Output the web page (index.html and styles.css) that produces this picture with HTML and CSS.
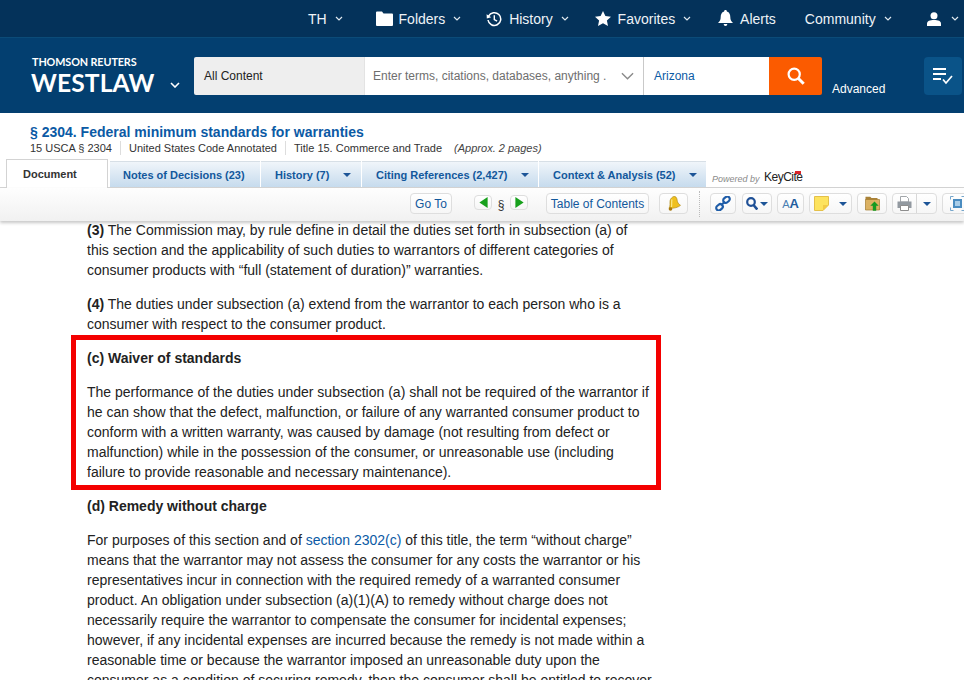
FILE: index.html
```html
<!DOCTYPE html>
<html lang="en">
<head>
<meta charset="utf-8">
<title>Westlaw</title>
<link rel="stylesheet" href="styles.css">
</head>
<body>
<nav class="topbar">
  <span class="nav-item nav-th">TH <svg class="chev" viewBox="0 0 8 5"><path d="M1 1l3 3 3-3"/></svg></span>
  <span class="nav-item nav-folders"><svg class="ico ico-folder" viewBox="0 0 17 15"><path d="M0 1.500Q0 .5 1 .5h5l1.500 2H16q1 0 1 1V14q0 1-1 1H1q-1 0-1-1z"/></svg>Folders <svg class="chev" viewBox="0 0 8 5"><path d="M1 1l3 3 3-3"/></svg></span>
  <span class="nav-item nav-history"><svg class="ico ico-history" viewBox="0 0 16 16"><path d="M2.600 5.200A6.400 6.400 0 1 1 2 9" fill="none" stroke="#fff" stroke-width="1.500"/><path d="M0.600 3.200l4.600 3-4.400 1.200z" fill="#fff"/><path d="M8.300 4.200v4.300l2.800 1.700" fill="none" stroke="#fff" stroke-width="1.400"/></svg>History <svg class="chev" viewBox="0 0 8 5"><path d="M1 1l3 3 3-3"/></svg></span>
  <span class="nav-item nav-fav"><svg class="ico ico-star" viewBox="0 0 16 15"><path d="M8 0l2.400 5 5.600.7-4.100 3.800 1.100 5.500L8 12.300 3 15l1.100-5.500L0 5.700 5.600 5z"/></svg>Favorites <svg class="chev" viewBox="0 0 8 5"><path d="M1 1l3 3 3-3"/></svg></span>
  <span class="nav-item nav-alerts"><svg class="ico ico-bell" viewBox="0 0 15 17"><path d="M7.500 0c1 0 1.400.7 1.400 1.400C11.500 2.200 12.300 4.500 12.300 7c0 3 1 4.500 2.700 6H0c1.700-1.500 2.700-3 2.700-6 0-2.500.8-4.800 3.400-5.600C6.100.7 6.500 0 7.500 0zM5.700 14h3.600c0 1.200-.8 2-1.800 2s-1.800-.8-1.800-2z"/></svg>Alerts</span>
  <span class="nav-item nav-comm">Community <svg class="chev" viewBox="0 0 8 5"><path d="M1 1l3 3 3-3"/></svg></span>
  <span class="nav-item nav-user"><svg class="ico ico-user" viewBox="0 0 14 14"><circle cx="7" cy="3.700" r="3.500"/><path d="M0 14v-2.500C0 9 3 8 7 8s7 1 7 3.500V14z"/></svg><svg class="chev" viewBox="0 0 8 5"><path d="M1 1l3 3 3-3"/></svg></span>
</nav>

<header class="brandbar">
  <div class="logo">
    <div class="logo-tr">THOMSON REUTERS</div>
    <div class="logo-wl">WESTLAW</div>
  </div>
  <svg class="logo-chev" viewBox="0 0 10 6"><path d="M1 1l4 4 4-4"/></svg>
  <div class="search">
    <div class="s-scope">All Content</div>
    <div class="s-input"><span>Enter terms, citations, databases, anything .</span><svg class="s-chev" viewBox="0 0 14 8"><path d="M1 1l6 6 6-6"/></svg></div>
    <div class="s-jur">Arizona</div>
    <div class="s-btn"><svg viewBox="0 0 18 18"><circle cx="7.200" cy="7.200" r="5.600" fill="none" stroke="#fff" stroke-width="2.200"/><path d="M11.200 11.200l5.500 5.500" stroke="#fff" stroke-width="3" fill="none"/></svg></div>
  </div>
  <div class="advanced">Advanced</div>
  <div class="listbtn"><svg viewBox="0 0 22 18"><path d="M1 2h13M1 7h13M1 12h8" stroke="#fff" stroke-width="2.200" fill="none"/><path d="M11 12.500l3 3.500 6-7" stroke="#fff" stroke-width="1.700" fill="none"/></svg></div>
</header>

<section class="dochead">
  <h1 class="doctitle">§ 2304. Federal minimum standards for warranties</h1>
  <div class="cite">
    <span class="cite-a">15 USCA § 2304</span>
    <span class="cite-b">United States Code Annotated</span>
    <span class="cite-c">Title 15. Commerce and Trade</span>
    <em class="cite-d">(Approx. 2 pages)</em>
  </div>
</section>

<div class="tabs">
  <div class="tab tab-doc">Document</div>
  <div class="tab tab-notes">Notes of Decisions (23)</div>
  <div class="tab tab-hist">History (7)<i class="caret"></i></div>
  <div class="tab tab-cite">Citing References (2,427)<i class="caret"></i></div>
  <div class="tab tab-ctx">Context &amp; Analysis (52)<i class="caret"></i></div>
  <div class="keycite"><span class="pw">Powered by</span><span class="kc">KeyCite</span></div>
</div>

<div class="toolbar">
  <button class="tb tb-goto">Go To</button>
  <button class="tb tb-arrow tb-prev"><svg viewBox="0 0 9 12"><path d="M9 0v12L0 6z" fill="#17a01c"/></svg></button>
  <span class="sect">§</span>
  <button class="tb tb-arrow tb-next"><svg viewBox="0 0 9 12"><path d="M0 0v12l9-6z" fill="#17a01c"/></svg></button>
  <button class="tb tb-toc">Table of Contents</button>
  <button class="tb tb-bell"><svg viewBox="0 0 14 15"><path d="M8 .5c1.500.6 2 2 2.200 3.800.2 1.900 1.200 3.800 3.300 5-2 2-6.500 3.400-11.500 3 1.600-2.600.7-4.700 1-7.200C3.200 3 5.500 0 8 .5z" fill="#efc01f" stroke="#a8820f" stroke-width=".6"/><path d="M5 3.500C4.300 5.500 5 8 4.500 11" stroke="#fbe98a" stroke-width="1.200" fill="none"/><circle cx="3.500" cy="13" r="1.800" fill="#a8780f"/></svg></button>
  <span class="dots"></span>
  <button class="tb tb-link"><svg viewBox="0 0 16 15"><g fill="none" stroke="#1f5da8" stroke-width="2.200"><rect x="8" y="1.200" width="7" height="5" rx="2.500" transform="rotate(-40 11.500 3.700)"/><rect x="1" y="8.800" width="7" height="5" rx="2.500" transform="rotate(-40 4.500 11.300)"/><path d="M6 9l4-3.200"/></g></svg></button>
  <button class="tb tb-find"><svg class="i-find" viewBox="0 0 12 13"><circle cx="5" cy="5" r="3.800" fill="none" stroke="#1f5096" stroke-width="2.200"/><path d="M7.500 8l3.800 4.500" stroke="#1f5096" stroke-width="2.600"/></svg><i class="caret caret-s"></i></button>
  <button class="tb tb-aa"><span class="a1">A</span><span class="a2">A</span></button>
  <button class="tb tb-note"><svg viewBox="0 0 15 15"><path d="M.5.500h14V9l-5.500 5.500H.5z" fill="#fde35e" stroke="#e4c04a"/><path d="M9 14.500V9h5.500z" fill="#f2ca45"/></svg><i class="caret"></i></button>
  <button class="tb tb-folder"><svg viewBox="0 0 15 15"><path d="M.5 2V.8h4.700L6.500 2h6v2H.5z" fill="#a98238"/><path d="M.5 3.500h14V14H.5z" fill="#dcb263" stroke="#a37b2f" stroke-width=".7"/><path d="M9.500 5.500l4.200 4.200h-2.500v5H7.800v-5H5.300z" fill="#159a22"/></svg></button>
  <button class="tb tb-print"><span class="p-l"><svg viewBox="0 0 15 15"><path d="M3.500.5h6l2 2V6h-8z" fill="#fff" stroke="#a2a6aa"/><path d="M.5 5.500h14v6.500H.5z" fill="#9299a0"/><path d="M3.500 9.500h8v5h-8z" fill="#fff" stroke="#8d8d8d"/></svg></span><span class="p-r"><i class="caret"></i></span></button>
  <button class="tb tb-full"><svg viewBox="0 0 15 15"><path d="M.5 3.500v-3h3M11.500.500h3v3M14.500 11.500v3h-3M3.500 14.500h-3v-3" fill="none" stroke="#77a7cc" stroke-width="1"/><rect x="3" y="3" width="9" height="9" fill="#4a8cc0"/><rect x="5" y="5" width="5" height="5" fill="#a9cde8"/></svg></button>
</div>

<main class="doc">
  <p class="para"><b>(3)</b> The Commission may, by rule define in detail the duties set forth in subsection (a) of<br>this section and the applicability of such duties to warrantors of different categories of<br>consumer products with “full (statement of duration)” warranties.</p>
  <p class="para"><b>(4)</b> The duties under subsection (a) extend from the warrantor to each person who is a<br>consumer with respect to the consumer product.</p>
  <h2 class="head">(c) Waiver of standards</h2>
  <p class="para">The performance of the duties under subsection (a) shall not be required of the warrantor if<br>he can show that the defect, malfunction, or failure of any warranted consumer product to<br>conform with a written warranty, was caused by damage (not resulting from defect or<br>malfunction) while in the possession of the consumer, or unreasonable use (including<br>failure to provide reasonable and necessary maintenance).</p>
  <h2 class="head">(d) Remedy without charge</h2>
  <p class="para">For purposes of this section and of <a class="lnk">section 2302(c)</a> of this title, the term “without charge”<br>means that the warrantor may not assess the consumer for any costs the warrantor or his<br>representatives incur in connection with the required remedy of a warranted consumer<br>product. An obligation under subsection (a)(1)(A) to remedy without charge does not<br>necessarily require the warrantor to compensate the consumer for incidental expenses;<br>however, if any incidental expenses are incurred because the remedy is not made within a<br>reasonable time or because the warrantor imposed an unreasonable duty upon the<br>consumer as a condition of securing remedy, then the consumer shall be entitled to recover</p>
  <div class="redbox"></div>
</main>
</body>
</html>
```
FILE: styles.css
```css
* { box-sizing: border-box; }
html, body { margin: 0; padding: 0; }
body {
  width: 964px; height: 680px; overflow: hidden; background: #fff;
  font-family: "Liberation Sans", Arial, sans-serif; color: #222;
}

/* top navigation */
.topbar {
  height: 38px; background: #04325a; border-bottom: 1px solid #0b4b78;
  display: flex; align-items: center; color: #fff; font-size: 14px;
}
.nav-item { display: flex; align-items: center; white-space: pre; color: #eef3f7; }
.chev { width: 8px; height: 5px; fill: none; stroke: #dfe8ef; stroke-width: 1.200; margin-left: 4px; }
.ico { fill: #fff; display: block; }
.nav-th { margin-left: 308px; }
.nav-folders { margin-left: 33px; }
.ico-folder { width: 17px; height: 15px; margin-right: 6px; }
.nav-history { margin-left: 25px; }
.ico-history { width: 16px; height: 16px; margin-right: 7px; fill: none; }
.nav-fav { margin-left: 26px; }
.ico-star { width: 16px; height: 15px; margin-right: 7px; }
.nav-alerts { margin-left: 27px; }
.ico-bell { width: 15px; height: 17px; margin-right: 7px; }
.nav-comm { margin-left: 29px; }
.nav-user { margin-left: 35px; }
.ico-user { width: 14px; height: 14px; margin-right: 6px; }

/* brand and search */
.brandbar {
  height: 75px; background: #033f70; display: flex; align-items: flex-start; position: relative;
}
.logo { margin: 18px 0 0 31px; width: 125px; color: #fff; font-family: Lato, "Open Sans", sans-serif; font-weight: 700; }
.logo-tr { font-size: 10.800px; line-height: 11px; letter-spacing: -.1px; margin-left: 1px; }
.logo-wl { font-size: 24.600px; line-height: 25px; margin-top: 3px; letter-spacing: .1px; }
.logo-chev { width: 10px; height: 6px; margin: 44px 0 0 14px; fill: none; stroke: #fff; stroke-width: 1.600; }
.search { display: flex; height: 38px; margin: 19px 0 0 14px; font-size: 12px; }
.s-scope { width: 170px; background: #eeeeee; color: #222; padding-left: 10px; line-height: 38px; border-radius: 2px 0 0 2px; }
.s-input { width: 279px; background: #fff; color: #6e6e6e; border-left: 1px solid #e3e3e3; padding-left: 8px; line-height: 38px; display: flex; align-items: center; }
.s-chev { width: 13px; height: 8px; margin-left: 15px; fill: none; stroke: #8a8a8a; stroke-width: 1.500; }
.s-jur { width: 126px; background: #fff; color: #0b5aa5; border-left: 1px solid #c9c9c9; padding-left: 10px; line-height: 38px; }
.s-btn { width: 53px; background: #fb5b00; border-radius: 0 2px 2px 0; display: flex; align-items: center; justify-content: center; }
.s-btn svg { width: 18px; height: 18px; }
.advanced { color: #fff; font-size: 12px; margin: 44px 0 0 10px; line-height: 14px; }
.listbtn { position: absolute; left: 924px; top: 19px; width: 38px; height: 38px; background: #0a5388; border-radius: 4px; display: flex; align-items: center; justify-content: center; }
.listbtn svg { width: 22px; height: 18px; }

/* document heading */
.dochead { height: 47px; padding: 11px 0 0 30px; }
.doctitle { margin: 0; font-size: 14px; line-height: 16px; font-weight: 700; color: #0b5aa5; }
.cite { display: flex; font-size: 11px; line-height: 14px; margin-top: 1px; color: #333; }
.cite span { padding-right: 8px; margin-right: 8px; border-right: 1px solid #ddd; }
.cite-d { color: #444; margin-left: 4px; }
.cite span.cite-c { border-right: 0; margin-right: 0; }

/* tabs */
.tabs { height: 28px; display: flex; align-items: flex-end; padding-left: 6px; border-bottom: 1px solid #d5d5d5; position: relative; }
.tab {
  height: 26px; font-size: 11px; font-weight: 700; color: #12589c; display: flex; align-items: center; padding-left: 14px;
  background: linear-gradient(#f0f5fa, #c6dbed); border-top: 1px solid #d7dfe6; margin-right: 1px; white-space: nowrap;
}
.tab-doc { width: 102px; height: 29px; background: #fff; color: #333; border: 1px solid #d3d3d3; border-bottom: 0; margin: 0 2px -1px 0; padding-left: 16px; }
.tab-notes { width: 150px; padding-left: 13px; }
.tab-hist { width: 100px; }
.tab-cite { width: 176px; }
.tab-ctx { width: 167px; }
.caret { display: block; width: 0; height: 0; border: 4px solid transparent; border-top-color: #1d5597; border-bottom: 0; margin-left: 14px; flex: none; }
.keycite { display: flex; align-items: center; margin: 0 0 0 5px; height: 20px; }
.pw { font-size: 9px; font-style: italic; color: #8a8a8a; margin-top: 3px; width: 48px; white-space: nowrap; }
.kc { font-size: 12px; color: #222; margin-left: 4px; letter-spacing: -.5px; position: relative; }
.kc::after { content: ""; position: absolute; right: 2px; top: 1px; width: 6px; height: 3px; background: #d8232a; }

/* toolbar */
.toolbar {
  height: 33px; background: linear-gradient(#fefefe, #f1f1f1); box-shadow: 0 2px 3px rgba(0,0,0,.22);
  display: flex; align-items: flex-start; padding: 5px 0 0 410px; position: relative; overflow: hidden;
}
.tb {
  height: 21px; padding: 0; margin: 0; font: 12px "Liberation Sans", Arial, sans-serif; color: #12589c;
  background: linear-gradient(#fff, #f6f6f6); border: 1px solid #dedede; border-radius: 4px;
  display: flex; align-items: center; justify-content: center; flex: none;
}
.tb svg { display: block; }
.tb-goto { width: 42px; }
.tb-arrow { width: 18px; height: 15px; margin-top: 2px; }
.tb-arrow svg { width: 9px; height: 11px; }
.tb-prev { margin-left: 22px; }
.sect { width: 18px; flex: none; text-align: center; font-size: 12px; color: #333; line-height: 24px; }
.tb-toc { width: 103px; margin-left: 18px; }
.tb-bell { width: 29px; margin-left: 10px; }
.tb-bell svg { width: 14px; height: 15px; }
.dots { width: 0; flex: none; height: 26px; border-left: 1px dotted #bbb; margin: -2px 0 0 11px; }
.tb-link { width: 26px; margin-left: 10px; }
.tb-link svg { width: 16px; height: 15px; }
.tb-find { width: 30px; margin-left: 6px; }
.i-find { width: 12px; height: 13px; }
.caret-s { margin-left: 2px; }
.tb-aa { width: 27px; margin-left: 5px; font-weight: 700; color: #1f5d9e; align-items: baseline; line-height: 19px; }
.a1 { font-weight: 400; font-size: 11px; color: #4a7fb3; }
.a2 { font-size: 13px; }
.tb-note { width: 43px; margin-left: 5px; }
.tb-note svg { width: 15px; height: 15px; }
.tb-note .caret { margin-left: 10px; }
.tb-folder { width: 30px; margin-left: 5px; }
.tb-folder svg { width: 15px; height: 15px; }
.tb-print { width: 45px; margin-left: 5px; }
.p-l { flex: 1; height: 100%; display: flex; align-items: center; justify-content: center; border-right: 1px solid #d8d8d8; }
.p-l svg { width: 15px; height: 15px; }
.p-r { width: 19px; display: flex; justify-content: center; }
.p-r .caret { margin: 0; }
.tb-full { width: 30px; margin-left: 5px; }
.tb-full svg { width: 15px; height: 15px; }

/* document body */
.doc { position: relative; padding: 0 0 0 87px; margin-top: -1px; font-size: 14px; line-height: 20px; color: #222; white-space: nowrap; }
.para { margin: 0 0 14px; }
.head { margin: 0 0 14px; font-size: 14px; line-height: 20px; font-weight: 700; }
.lnk { color: #0b5aa5; }
.redbox { position: absolute; left: 71px; top: 115px; width: 590px; height: 155px; border: 5px solid #f40000; }
```
